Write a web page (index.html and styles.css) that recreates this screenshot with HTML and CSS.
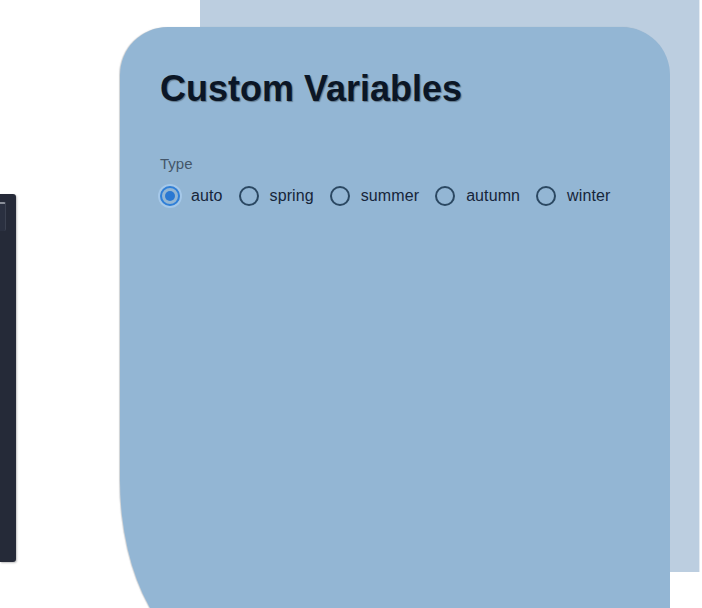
FILE: index.html
```html
<!DOCTYPE html>
<html lang="en">
<head>
<meta charset="utf-8">
<title>Custom Variables</title>
<link rel="stylesheet" href="styles.css">
</head>
<body>
<div class="page">
  <aside class="drawer">
    <div class="drawer-tab"></div>
  </aside>
  <div class="stage">
    <div class="backdrop">
      <section class="card">
        <h1 class="title">Custom Variables</h1>
        <div class="field">
          <div class="field-label">Type</div>
          <div class="radios">
            <label class="radio"><input type="radio" name="type" checked><span class="dot"></span><span class="radio-text">auto</span></label>
            <label class="radio"><input type="radio" name="type"><span class="dot"></span><span class="radio-text">spring</span></label>
            <label class="radio"><input type="radio" name="type"><span class="dot"></span><span class="radio-text">summer</span></label>
            <label class="radio"><input type="radio" name="type"><span class="dot"></span><span class="radio-text">autumn</span></label>
            <label class="radio"><input type="radio" name="type"><span class="dot"></span><span class="radio-text">winter</span></label>
          </div>
        </div>
      </section>
    </div>
  </div>
</div>
</body>
</html>
```
FILE: styles.css
```css
html, body {
  margin: 0;
  padding: 0;
  background: #ffffff;
  overflow: hidden;
  height: 608px;
}
body {
  font-family: "Liberation Sans", Arial, Helvetica, sans-serif;
}
.page {
  display: flex;
  align-items: flex-start;
  width: 702px;
  height: 608px;
}
.drawer {
  width: 16px;
  height: 368px;
  margin-top: 194px;
  background: #252a38;
  border-radius: 0 3px 3px 0;
  box-shadow: 1px 1px 2px rgba(0,0,0,0.25);
  flex: none;
  padding-top: 8px;
  box-sizing: border-box;
}
.drawer-tab {
  width: 5px;
  height: 27px;
  background: #2a3040;
  border-top: 2px solid #8a8f99;
  border-right: 1px solid #3b4150;
  border-radius: 0 2px 2px 0;
}
.stage {
  margin-left: 184px;
  flex: none;
}
.backdrop {
  width: 500px;
  height: 572px;
  background: #bccee0;
  border-right: 1px solid #e4ebf2;
  padding-top: 27px;
  box-sizing: border-box;
}
.card {
  margin-left: -80px;
  width: 550px;
  height: 633px;
  box-sizing: border-box;
  background: #93b6d4;
  border-radius: 48px 48px 0 101px / 48px 48px 0 180px;
  box-shadow: -1px 0 1px rgba(90,100,110,0.3);
  padding: 41px 40px 0 40px;
}
.title {
  margin: 0;
  font-size: 36px;
  font-weight: 700;
  line-height: 41px;
  color: #0b1626;
  text-shadow: 1px 1px 1px rgba(0,0,0,0.35);
}
.field {
  margin-top: 46px;
}
.field-label {
  font-size: 15px;
  line-height: 17px;
  color: #44566a;
}
.radios {
  display: flex;
  align-items: center;
  margin-top: 14px;
  gap: 16px;
}
.radio {
  display: flex;
  align-items: center;
  gap: 11px;
  cursor: pointer;
}
.radio input {
  display: none;
}
.dot {
  width: 20px;
  height: 20px;
  box-sizing: border-box;
  border: 2px solid #2b4862;
  border-radius: 50%;
  display: flex;
  align-items: center;
  justify-content: center;
}
.radio input:checked + .dot {
  border-color: #2f7fd8;
  box-shadow: 0 0 0 2px rgba(180,215,250,0.55);
}
.radio input:checked + .dot::after {
  content: "";
  width: 10px;
  height: 10px;
  border-radius: 50%;
  background: #2a78d2;
}
.radio-text {
  font-size: 16px;
  line-height: 20px;
  letter-spacing: 0.1px;
  color: #16253a;
}
```
